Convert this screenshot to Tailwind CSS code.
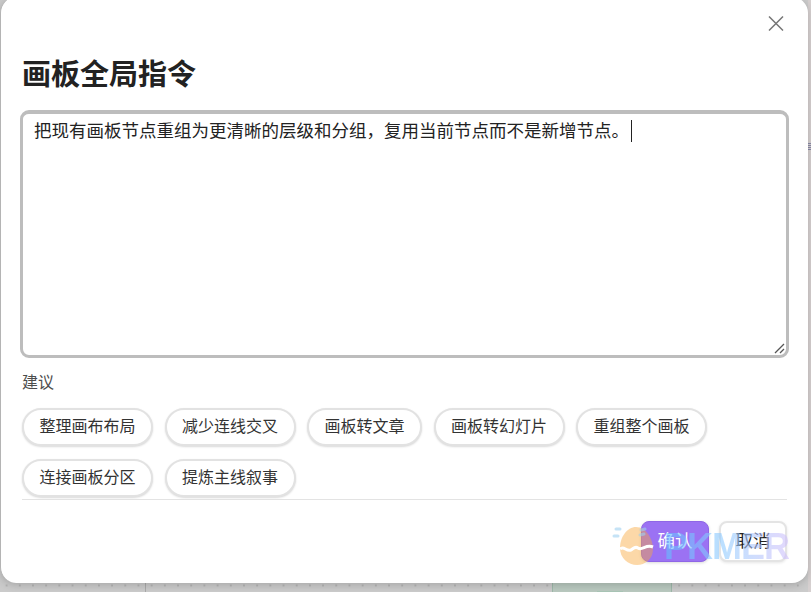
<!doctype html>
<html><head><meta charset="utf-8"><script src="https://cdn.jsdelivr.net/npm/@tailwindcss/browser@4"></script></head>
<body class="m-0">
<div class="relative w-[811px] h-[592px] overflow-hidden bg-[#cbcbcb] font-['Liberation_Sans','Noto_Sans_CJK_SC',sans-serif]">
  <!-- canvas behind the dialog -->
  <div class="absolute left-0 right-0 top-[584px] h-[3px] bg-[radial-gradient(circle,#b4b4b4_1px,transparent_1.2px)] bg-[length:13.2px_3px]"></div>
  <div class="absolute left-[145px] top-[580px] w-px h-[12px] bg-[#aaaaaa]"></div>
  <div class="absolute left-[552px] top-[580px] w-[120px] h-[12px] bg-[#b9c9bf] border-x border-[#9db8a9]"></div>
  <div class="absolute left-[597px] top-[591px] w-[26px] h-px bg-[#a9c5b6]"></div>
  <div class="absolute right-0 top-0 w-[3px] h-[592px] bg-[#d6d0d0]"></div>
  <div class="absolute right-0 top-[143px] w-[3px] h-[8px] bg-[repeating-linear-gradient(#8a8aa8_0_1px,#d6d0d0_1px_2px)]"></div>

  <div class="absolute left-0 top-[-3px] w-[808px] h-[586px] bg-white rounded-[16px] border-l border-[#b4b4b4] shadow-[0_2px_8px_rgba(0,0,0,0.18)] flex flex-col pl-[21px]">
    <div class="flex justify-end h-[58px] pt-[19px] pr-[24px]">
      <svg class="w-[16px] h-[15px]" viewBox="0 0 16 15" fill="none" stroke="#777" stroke-width="1.5"><path d="M1 .5L15 14.5M15 .5L1 14.5"/></svg>
    </div>
    <h1 class="m-0 text-[29px] leading-[40px] font-bold text-[#222] h-[40px]">画板全局指令</h1>
    <div class="relative mt-[15px] ml-[-2px] w-[769px] h-[248px] border-[3px] border-t-[4px] border-[#bdbdbd] rounded-[9px] pl-[11px] pt-[4px] text-[17.5px] leading-[26px] text-[#222]">
      把现有画板节点重组为更清晰的层级和分组，复用当前节点而不是新增节点。<span class="inline-block align-[-5px] w-px h-[22px] bg-[#222] ml-[2px]"></span>
      <svg class="absolute right-[1px] bottom-[1px] w-[11px] h-[11px]" viewBox="0 0 11 11" stroke="#555" stroke-width="1.3" fill="none"><path d="M1 10L10 1M6 10L10 6"/></svg>
    </div>
    <div class="mt-[14px] text-[16px] leading-[22px] text-[#4d4d4d]">建议</div>
    <div class="mt-[14px] flex flex-wrap gap-x-[11.5px] gap-y-[13px] w-[767px]">
      <button class="h-[38px] px-[15.5px] rounded-full bg-white border-2 border-[#e2e2e2] shadow-[0_1px_2px_rgba(0,0,0,0.15)] text-[16px] text-[#333]">整理画布布局</button>
      <button class="h-[38px] px-[15.5px] rounded-full bg-white border-2 border-[#e2e2e2] shadow-[0_1px_2px_rgba(0,0,0,0.15)] text-[16px] text-[#333]">减少连线交叉</button>
      <button class="h-[38px] px-[15.5px] rounded-full bg-white border-2 border-[#e2e2e2] shadow-[0_1px_2px_rgba(0,0,0,0.15)] text-[16px] text-[#333]">画板转文章</button>
      <button class="h-[38px] px-[15.5px] rounded-full bg-white border-2 border-[#e2e2e2] shadow-[0_1px_2px_rgba(0,0,0,0.15)] text-[16px] text-[#333]">画板转幻灯片</button>
      <button class="h-[38px] px-[15.5px] rounded-full bg-white border-2 border-[#e2e2e2] shadow-[0_1px_2px_rgba(0,0,0,0.15)] text-[16px] text-[#333]">重组整个画板</button>
      <button class="h-[38px] px-[15.5px] rounded-full bg-white border-2 border-[#e2e2e2] shadow-[0_1px_2px_rgba(0,0,0,0.15)] text-[16px] text-[#333]">连接画板分区</button>
      <button class="h-[38px] px-[15.5px] rounded-full bg-white border-2 border-[#e2e2e2] shadow-[0_1px_2px_rgba(0,0,0,0.15)] text-[16px] text-[#333]">提炼主线叙事</button>
    </div>
    <div class="mt-[2px] w-[765px] border-t border-[#e3e3e3]"></div>
    <div class="mt-[21px] w-[765px] flex justify-end gap-[10px]">
      <button class="w-[68px] h-[41px] rounded-[8px] bg-[#9b72f3] border border-[#8f66e6] text-white text-[17.5px] shadow-[0_1px_3px_rgba(0,0,0,0.15)]">确认</button>
      <button class="w-[68px] h-[41px] rounded-[8px] bg-white border-2 border-[#e4e4e4] text-[#222] text-[17.5px] shadow-[0_1px_3px_rgba(0,0,0,0.1)]">取消</button>
    </div>
  </div>

  <!-- PKMER watermark over the buttons -->
  <div class="absolute left-[612px] top-[524px] w-[182px] h-[44px] pointer-events-none">
    <svg class="absolute left-0 top-0 w-[44px] h-[44px]" viewBox="0 0 44 44" fill="none">
      <path d="M24 3C34 3 41 15 41 25C41 35 33 41 25 41C16 41 8 34 8 24C8 13 15 3 24 3Z" fill="#f9a83f" fill-opacity=".45"/>
      <path d="M8 25C12 21 14 28 19 26C22 24 23 22 26 24C30 27 34 20 41 23" stroke="#fff" stroke-width="3"/>
      <path d="M4 5H8M2 12H6M29 6L33 5M28 11L32 10" stroke="#9fd0f0" stroke-opacity=".6" stroke-width="3" stroke-linecap="round"/>
    </svg>
    <div class="absolute left-[52px] top-[2px] text-[36px] leading-[42px] font-bold tracking-[-1px] text-transparent bg-clip-text bg-gradient-to-r from-[#62bdff] via-[#93ccff] to-[#d0c0fb] opacity-60">PKMER</div>
  </div>
</div>
</body></html>
